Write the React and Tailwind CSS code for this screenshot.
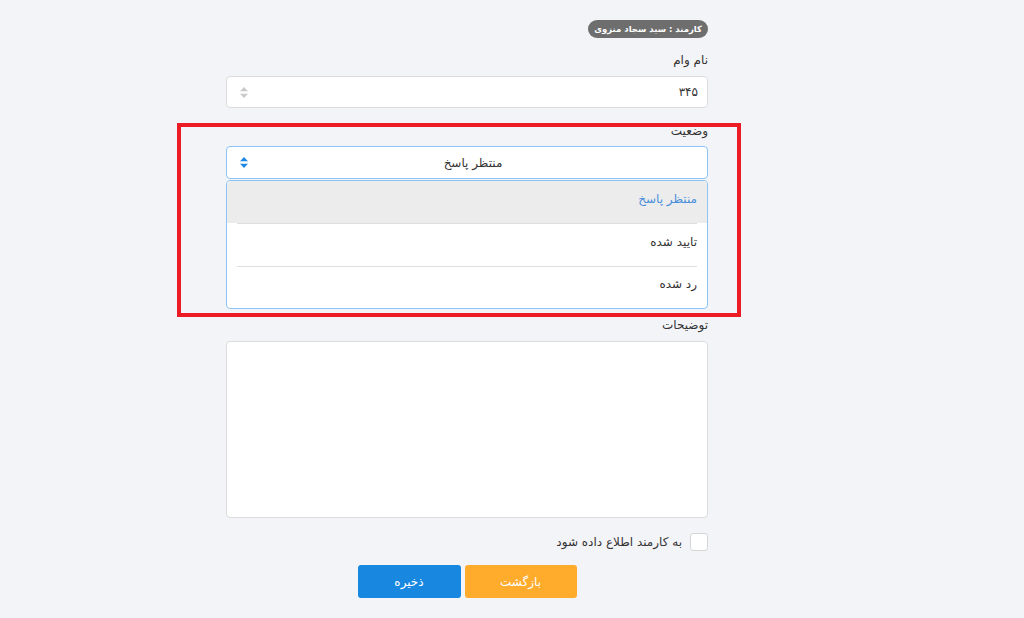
import React from "react";

const font = { fontFamily: '"DejaVu Sans", "Noto Sans", sans-serif' };

const UpDown = ({ color }) => (
  <svg width="8" height="11" viewBox="0 0 8 11">
    <path d="M4 0 L8 4.2 L0 4.2 Z" fill={color} />
    <path d="M4 11 L8 6.8 L0 6.8 Z" fill={color} />
  </svg>
);

const options = ["منتظر پاسخ", "تایید شده", "رد شده"];

const App = () => {
  return (
    <div className="min-h-screen bg-[#f3f4f8] pt-[20px]" style={font}>
      <div dir="rtl" className="ml-[226px] w-[482px] flex flex-col">
        {/* Employee badge */}
        <div className="flex">
          <span className="h-[18px] px-[6px] rounded-full bg-[#6e6e6e] text-white text-[8.5px] font-bold leading-[18px]">
            کارمند : سید سجاد منزوی
          </span>
        </div>

        <div className="mt-[14px] h-[16px] leading-[16px] text-[12px] text-[#333]">
          نام وام
        </div>
        <div className="mt-[8px] h-[32px] bg-white border border-[#dcdcdc] rounded-[4px] flex items-center justify-between px-[9px]">
          <span className="text-[12px] text-[#333]">۳۴۵</span>
          <span className="ml-[4px] opacity-70">
            <UpDown color="#b5b5b5" />
          </span>
        </div>

        {/* Status select with open list */}
        <div className="relative">
          <div className="mt-[15px] h-[16px] leading-[16px] text-[12px] text-[#333]">
            وضعیت
          </div>
          <div className="mt-[7px] h-[33px] bg-white border border-[#8cc4f5] rounded-[4px] flex items-center px-[9px]">
            <span className="flex-1 text-center text-[12px] text-[#333]">منتظر پاسخ</span>
            <span className="ml-[4px]">
              <UpDown color="#1e88e5" />
            </span>
          </div>
          <div className="mt-[1px] h-[129px] bg-white border border-[#8cc4f5] rounded-[4px] overflow-hidden flex flex-col">
            {options.map((o, i) => (
              <div
                key={o}
                className={`flex-1 px-[10px] ${i === 0 ? "bg-[#ececec]" : ""}`}
              >
                <div
                  className={`h-full flex items-center pb-[6px] text-[12px] ${
                    i === 0 ? "text-[#4a8fdb]" : "text-[#333]"
                  } ${i > 0 ? "border-t border-[#dedede]" : ""}`}
                >
                  {o}
                </div>
              </div>
            ))}
          </div>
          {/* red highlight annotation */}
          <div className="absolute top-[15px] bottom-[-8px] left-[-49px] right-[-33px] border-[4px] border-[#ed1c24] pointer-events-none" />
        </div>

        <div className="mt-[8px] h-[16px] leading-[16px] text-[12px] text-[#333]">
          توضیحات
        </div>
        <div className="mt-[8px] h-[177px] bg-white border border-[#dcdcdc] rounded-[4px]" />

        <div className="mt-[15px] h-[18px] flex items-center gap-[8px]">
          <span className="w-[18px] h-[18px] bg-white border border-[#d6d6d6] rounded-[3px]" />
          <span className="text-[12px] text-[#333]">به کارمند اطلاع داده شود</span>
        </div>

        <div className="mt-[14px] flex justify-center gap-[4px]">
          <button className="w-[112px] h-[33px] rounded-[3px] bg-[#ffab2b] text-white text-[12px]">
            بازگشت
          </button>
          <button className="w-[103px] h-[33px] rounded-[3px] bg-[#1787e0] text-white text-[12px]">
            ذخیره
          </button>
        </div>
      </div>
    </div>
  );
};

export default App;
